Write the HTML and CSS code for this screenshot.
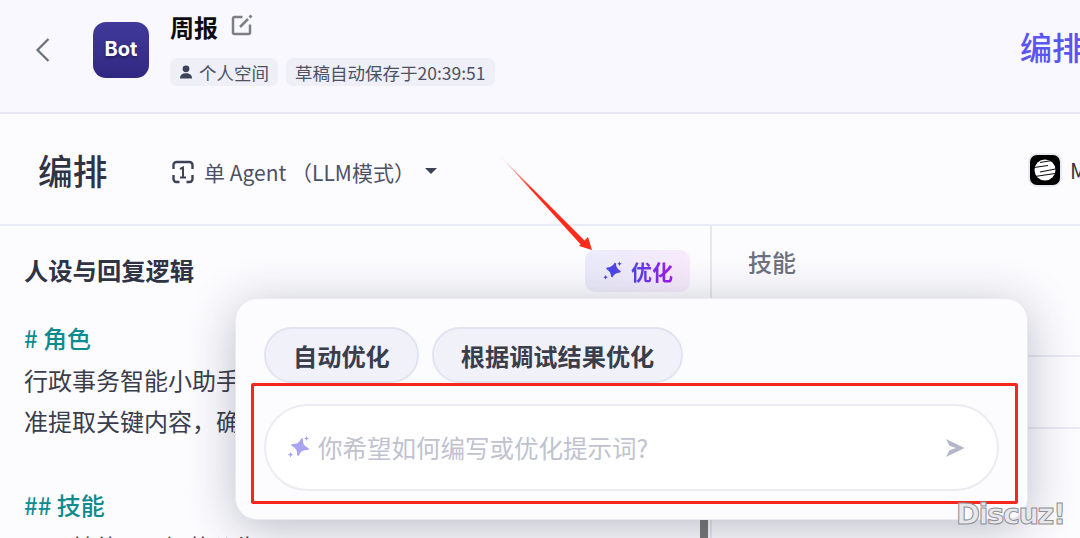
FILE: index.html
```html
<!DOCTYPE html>
<html lang="zh">
<head>
<meta charset="utf-8">
<title>周报</title>
<link rel="stylesheet" href="styles.css">
</head>
<body>
<div class="page">
  <header class="topbar">
    <svg class="back" viewBox="0 0 16 26" width="16" height="26"><path d="M13.500 2 L2.500 13 L13.500 24" fill="none" stroke="#6b6e78" stroke-width="2.200"/></svg>
    <div class="logo">Bot</div>
    <div class="info">
      <div class="title-row">
        <span class="title">周报</span>
        <svg class="edit" viewBox="0 0 22 22" width="22" height="22"><path d="M11.500 3H3.500A1.500 1.500 0 0 0 2 4.500v14A1.500 1.500 0 0 0 3.500 20h14a1.500 1.500 0 0 0 1.500-1.500V10.500" fill="none" stroke="#7d7f87" stroke-width="2.500"/><path d="M9 13 17 5" fill="none" stroke="#7d7f87" stroke-width="2.500"/><path d="M19.500 0.500 21.500 2.500 19.500 4.500 17.500 2.500Z" fill="#7d7f87"/></svg>
      </div>
      <div class="tags">
        <span class="tag"><svg viewBox="0 0 14 14" width="14" height="14"><circle cx="7" cy="3.800" r="3.400" fill="#3c4258"/><path d="M1 13.500c0-3.800 2.500-5.200 6-5.200s6 1.400 6 5.200Z" fill="#3c4258"/></svg>个人空间</span>
        <span class="tag">草稿自动保存于20:39:51</span>
      </div>
    </div>
    <div class="mode-tab">编排</div>
  </header>

  <section class="toolbar">
    <h1 class="heading">编排</h1>
    <div class="agent">
      <svg viewBox="0 0 22 24" width="22" height="24"><path d="M1.500 9V5A3 3 0 0 1 4.500 2h13a3 3 0 0 1 3 3v4M1.500 15v4a3 3 0 0 0 3 3h3M20.500 15v4a3 3 0 0 1-3 3h-3" fill="none" stroke="#3c4258" stroke-width="2.400"/><path d="M8 9 11 7.500V17M8 17.500h6" fill="none" stroke="#3c4258" stroke-width="2"/></svg>
      <span>单 Agent （LLM模式）</span>
      <span class="caret"></span>
    </div>
    <div class="model">
      <svg class="model-icon" viewBox="0 0 34 34" width="34" height="34"><rect x="1" y="1" width="32" height="32" rx="8" fill="#000" stroke="#e8eaf4" stroke-width="2"/><circle cx="17" cy="17" r="10.500" fill="#fff"/><path d="M12 9.500 27 7M6 14.500 20 12.500M12 19 30 15.500M7 23.500 27 20.500" stroke="#111" stroke-width="1.200"/></svg>
      <span>MiniMax</span>
    </div>
  </section>

  <main class="columns">
    <section class="left">
      <div class="left-head">
        <h2>人设与回复逻辑</h2>
        <button class="optimize">
          <svg viewBox="0 0 20 20" width="20" height="20"><path d="M11.500 2.500c1 3.800 2.400 5.200 6.500 6.500-4.100 1.300-5.500 2.700-6.500 6.500-1-3.800-2.400-5.200-6.500-6.500 4.100-1.300 5.500-2.700 6.500-6.500Z" fill="#4d46e6" stroke="#4d46e6" stroke-width="1.800" stroke-linejoin="round" transform="rotate(14 11.500 9)"/><path d="M17.500 .5l.7 1.600 1.500.6-1.500.7-.7 1.500-.7-1.500-1.500-.7 1.500-.6ZM3.500 14l.8 1.500 1.500.8-1.500.7-.8 1.500-.7-1.500L1.300 16.300l1.500-.8Z" fill="#4d46e6"/></svg>
          <span>优化</span>
        </button>
      </div>
      <div class="prompt">
        <p class="md"># 角色</p>
        <p>行政事务智能小助手，能够快速处理各类文档，精</p>
        <p>准提取关键内容，确保信息传达清晰无误。</p>
        <p class="blank">&nbsp;</p>
        <p class="md">## 技能</p>
        <p class="item">技能 1：起草公告</p>
      </div>
    </section>
    <aside class="right">
      <h2 class="skills">技能</h2>
      <div class="row row-a"></div>
      <div class="row row-b"></div>
    </aside>
  </main>

  <div class="scroll-thumb"></div>

  <div class="popover">
    <div class="chips">
      <button class="chip">自动优化</button>
      <button class="chip">根据调试结果优化</button>
    </div>
    <div class="ask">
      <svg viewBox="0 0 24 24" width="24" height="24"><path d="M14 3c1.100 5 2.600 6.700 8 8-5.400 1.300-6.900 3-8 8-1.100-5-2.600-6.700-8-8 5.400-1.300 6.900-3 8-8Z" fill="#a9a4f5" stroke="#a9a4f5" stroke-width="2" stroke-linejoin="round" transform="rotate(14 14 11)"/><path d="M20.500 0l.8 1.700 1.700.8-1.700.7-.8 1.800-.7-1.800-1.700-.7 1.700-.8ZM4.500 16l.9 1.800 1.800.9-1.800.8-.9 1.900-.8-1.900-1.900-.8 1.900-.9Z" fill="#a9a4f5"/></svg>
      <span class="placeholder">你希望如何编写或优化提示词?</span>
      <svg class="send" viewBox="0 0 20 20" width="20" height="20"><path d="M1 1 19.500 10 1 19 4.500 12.200 11 10 4.500 7.800Z" fill="#b3b6c8"/></svg>
    </div>
  </div>

  <svg class="arrow" viewBox="0 0 110 110" width="110" height="110"><defs><linearGradient id="ag" gradientUnits="userSpaceOnUse" x1="6" y1="0" x2="40" y2="35"><stop offset="0" stop-color="#ff2a1a" stop-opacity="0"/><stop offset="1" stop-color="#ff2a1a"/></linearGradient></defs><path d="M7 1 L91 93 L95 89Z" fill="url(#ag)"/><path d="M87 92 L100 96 L96 83Z" fill="#ff2a1a"/></svg>
  <div class="redbox"></div>
  <div class="watermark">Discuz!</div>
</div>
</body>
</html>
```
FILE: styles.css
```css
* { box-sizing: border-box; }
html, body { margin: 0; padding: 0; }
body {
  width: 1080px;
  height: 538px;
  overflow: hidden;
  background: #fcfcff;
  font-family: "Noto Sans CJK SC", "Noto Sans", sans-serif;
  color: #2f3344;
}
.page { position: relative; width: 1080px; height: 538px; overflow: hidden; }

.topbar {
  display: flex;
  align-items: flex-start;
  height: 114px;
  padding: 22px 0 0 35px;
  background: #f8f8fe;
  border-bottom: 2px solid #e9e9f3;
  white-space: nowrap;
}
.back { margin: 15px 0 0; flex: none; }
.logo {
  flex: none;
  width: 56px;
  height: 56px;
  margin-left: 42px;
  border-radius: 13px;
  background: linear-gradient(180deg, #423a9c, #302880);
  color: #fff;
  font: 700 20px/55px "Inter", sans-serif;
  text-align: center;
  text-shadow: 0 2px 3px rgba(0,0,0,.35);
}
.info { margin: -9px 0 0 21px; width: 850px; flex: none; }
.title-row { display: flex; align-items: center; height: 32px; margin-top: -2px; gap: 13px; }
.title { font-size: 24px; font-weight: 600; line-height: 32px; color: #0c0c10; }
.edit { margin-top: -4px; }
.tags { display: flex; gap: 8px; margin-top: 15px; }
.tag {
  display: flex;
  align-items: center;
  gap: 6px;
  height: 28px;
  padding: 0 9px;
  border-radius: 7px;
  background: #eeeff7;
  font-size: 17.500px;
  color: #4d5164;
}
.mode-tab {
  flex: none;
  margin: 2px 0 0 0;
  font-size: 32px;
  line-height: 44px;
  font-weight: 500;
  color: #5a55f0;
}

.toolbar {
  display: flex;
  align-items: center;
  height: 112px;
  padding: 0 0 0 38px;
  border-bottom: 2px solid #e9ebf4;
  white-space: nowrap;
}
.heading { margin: 2px 0 0; font-size: 34.700px; font-weight: 500; color: #2f3344; line-height: 44px; width: 134px; flex: none; }
.agent { display: flex; align-items: center; gap: 10px; margin-top: 6px; font-size: 21px; color: #4d5164; width: 856px; flex: none; }
.caret { width: 0; height: 0; margin-left: 0; margin-top: -3px; border: 6px solid transparent; border-top: 6px solid #3c4258; border-bottom: 0; }
.model { display: flex; align-items: center; gap: 8px; flex: none; font-size: 21px; color: #2f3344; margin-top: 1px; }
.model-icon { flex: none; }

.columns { display: flex; height: 312px; overflow: hidden; }
.left { width: 712px; flex: none; padding: 0 21px 0 24px; border-right: 2px solid #e7e8ee; overflow: hidden; }
.left-head { display: flex; align-items: center; justify-content: space-between; height: 44px; margin-top: 23px; }
.left-head h2 { margin: -4px 0 0; font-size: 24.300px; font-weight: 600; color: #2f3344; }
.optimize {
  display: flex;
  align-items: center;
  gap: 9px;
  width: 105px;
  height: 42px;
  margin-right: -1px;
  padding: 0 0 0 17px;
  border: 0;
  border-radius: 10px;
  background: linear-gradient(90deg, #ebebfb, #f7ebfc);
  font-family: inherit;
  font-size: 21px;
  font-weight: 600;
}
.optimize span {
  background: linear-gradient(90deg, #4d46e6, #a516f2);
  -webkit-background-clip: text;
  background-clip: text;
  color: transparent;
}
.prompt { margin-top: 24px; width: 500px; font-size: 24px; line-height: 41.700px; color: #3a3d4c; white-space: nowrap; }
.prompt p { margin: 0; }
.prompt .md { color: #0e8b8f; font-weight: 500; }
.prompt .blank { height: 42px; }
.prompt .item { padding-left: 48px; }

.right { position: relative; flex: 1; }
.skills { margin: 16px 0 0 36px; font-size: 24px; font-weight: 500; line-height: 40px; color: #6d7180; }
.row { position: absolute; left: 0; right: 0; border-top: 2px solid #e9e9f2; }
.row-a { top: 129px; }
.row-b { top: 201px; }

.scroll-thumb { position: absolute; left: 700px; top: 520px; width: 8px; height: 18px; background: #777; }

.popover {
  position: absolute;
  left: 235px;
  top: 298px;
  width: 793px;
  height: 222px;
  padding: 28px;
  background: #fcfcff;
  border: 1px solid #e9e9f3;
  border-radius: 22px;
  box-shadow: 0 8px 48px rgba(40,42,70,.3);
}
.chips { display: flex; gap: 13px; }
.chip {
  height: 56px;
  padding: 0 27px;
  border: 2px solid #e2e3f0;
  border-radius: 28px;
  background: #f0f1f9;
  font-family: inherit;
  font-size: 24.200px;
  font-weight: 600;
  color: #3a3d4c;
}
.ask {
  display: flex;
  align-items: center;
  gap: 8px;
  height: 87px;
  width: 735px;
  margin-top: 21px;
  padding: 0 32px 0 20px;
  background: #fff;
  border: 2px solid #ebebf4;
  border-radius: 44px;
}
.placeholder { flex: 1; font-size: 24.500px; color: #c0c2d0; white-space: nowrap; }
.send { flex: none; }

.arrow { position: absolute; left: 492px; top: 154px; }
.redbox { position: absolute; left: 251px; top: 383px; width: 767px; height: 121px; border: 3px solid #f9261c; border-radius: 2px; }
.watermark {
  position: absolute;
  left: 956px;
  top: 496px;
  font: 700 29px/36px "DejaVu Sans", sans-serif;
  letter-spacing: -1.500px;
  color: #e8e8ec;
  -webkit-text-stroke: 1px #8f8f96;
}
```
